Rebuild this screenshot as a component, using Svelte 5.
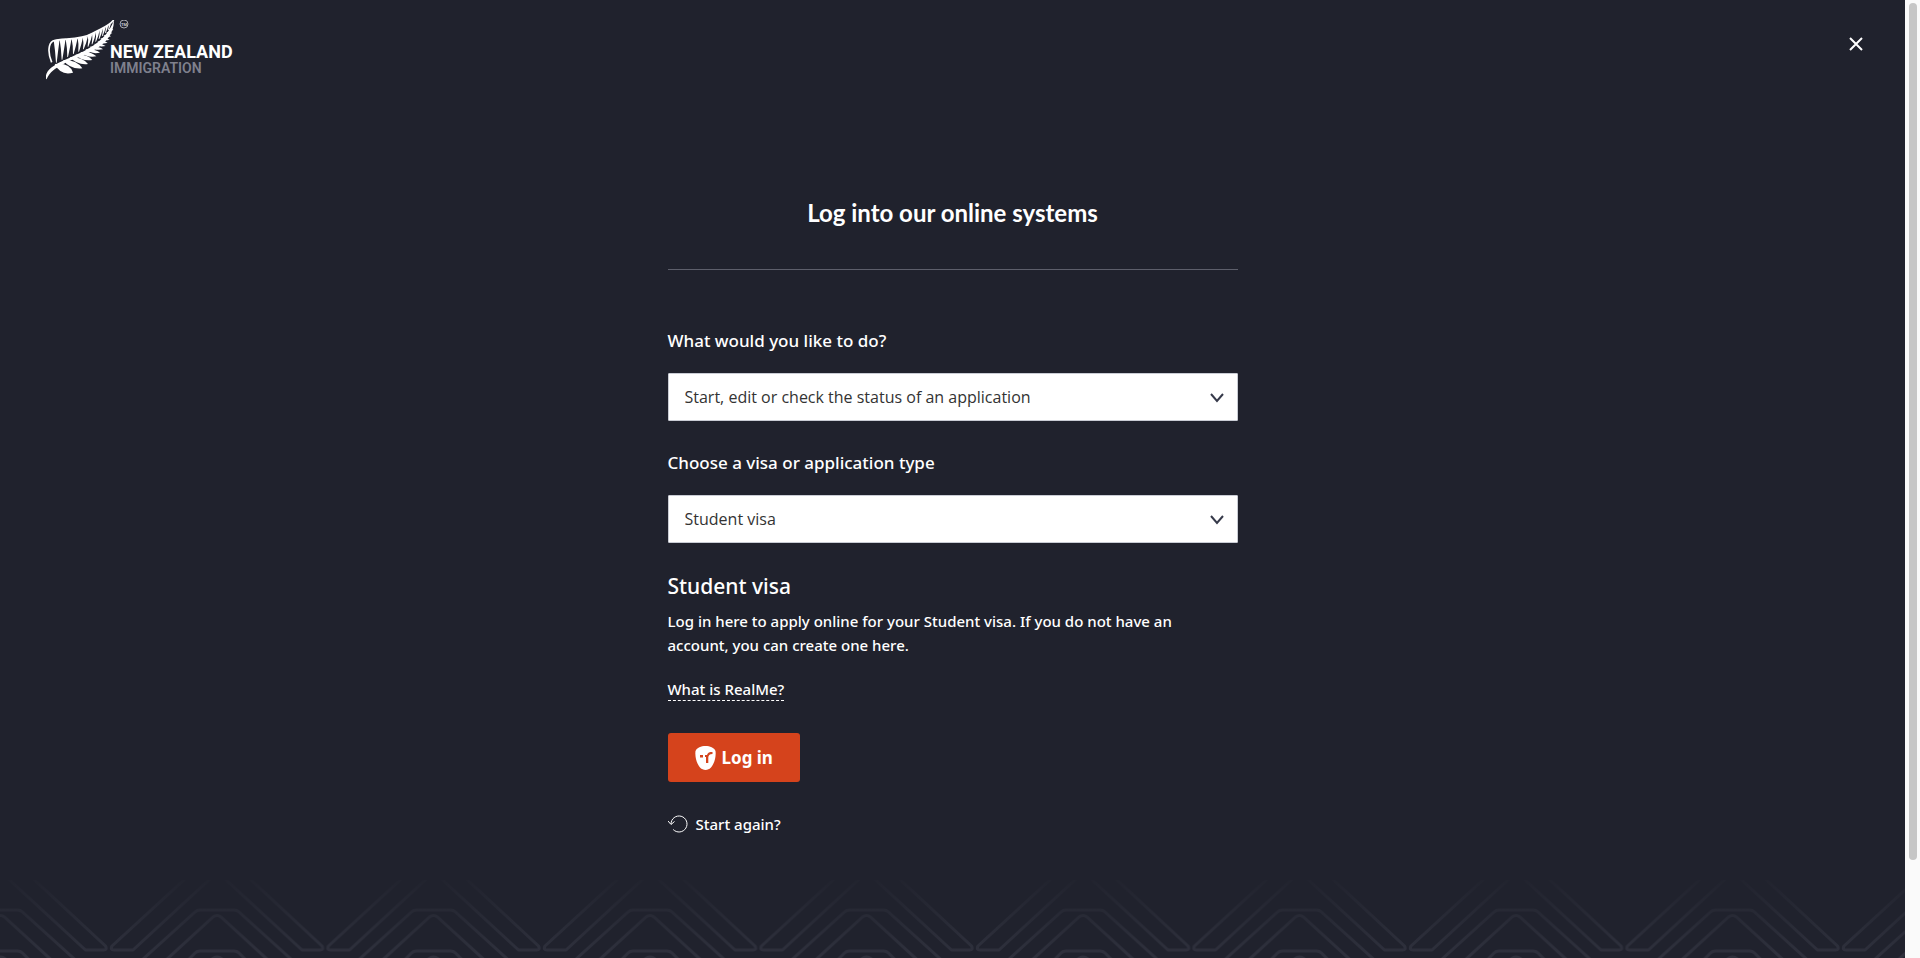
<script>
  const tasks = [
    'Start, edit or check the status of an application',
    'Respond to a request for information',
    'Check a visa',
  ];
  const visaTypes = ['Student visa', 'Visitor visa', 'Work visa', 'Resident visa'];

  let task = $state(tasks[0]);
  let visaType = $state(visaTypes[0]);
  let open = $state(true);

  const startAgain = () => {
    task = tasks[0];
    visaType = visaTypes[0];
  };

  // Upper fronds: x and y on the outer edge, x and y on the stem, width
  const upperFronds = [
    [44, 72, 43, 140, 9],
    [62, 70, 60, 131, 9],
    [80, 69, 77, 123, 9],
    [98, 68, 94, 114, 9],
    [115, 66, 110, 107, 8],
    [130, 62, 124, 100, 8],
    [144, 56, 138, 92, 7],
    [156, 51, 150, 85, 6],
    [167, 45, 161, 77, 6],
    [177, 40, 171, 69, 5],
    [186, 35, 181, 60, 5],
    [195, 30, 190, 51, 4],
    [203, 24, 199, 42, 4],
  ];

  // Lower fronds: base on the stem, tip, width
  const lowerFronds = [
    [38, 144, 93, 170, 18],
    [63, 132, 121, 157, 13],
    [83, 123, 138, 144, 11],
    [100, 116, 151, 132, 10],
    [115, 108, 163, 121, 9],
    [130, 100, 174, 110, 8],
    [143, 92, 183, 100, 7],
    [155, 84, 191, 90, 6],
    [166, 76, 197, 80, 6],
    [175, 67, 203, 71, 5],
    [184, 58, 207, 61, 5],
    [192, 49, 211, 52, 4],
    [199, 39, 214, 42, 4],
  ];

  const wedge = ([x1, y1, x2, y2, w]) => {
    const my = y1 + (y2 - y1) * 0.45;
    return `M${x1 - w} ${y1 + 1} Q${x1 - w / 2} ${my} ${x2 - 1} ${y2} L${x2 + 1} ${y2} Q${x1 + w / 2} ${my} ${x1 + w} ${y1 - 2}Z`;
  };

  const leaf = ([x1, y1, x2, y2, w]) => {
    const mx = (x1 + x2) / 2;
    const my = (y1 + y2) / 2;
    return `M${x1} ${y1} Q${mx + w} ${my - w} ${x2} ${y2} Q${mx - w / 2} ${my + w * 1.3} ${x1} ${y1}Z`;
  };
</script>

<div class="page">
  <div class="overlay">
    <header>
      <a class="logo" href="#home" aria-label="New Zealand Immigration">
        <svg width="190" height="60" viewBox="46 20 190 60">
          <g transform="translate(42 16) scale(0.3333)" fill="#fff">
            <path d="M11 190C9 168 26 152 60 136C112 111 192 86 216 11C216 100 112 118 66 143C38 158 24 166 14 189Z" />
            <path d="M29 139C16 108 20 82 33 75C62 65 112 76 152 52C180 36 202 30 215 12" fill="none" stroke="#fff" stroke-width="5" />
            {#each upperFronds as frond}
              <path d={wedge(frond)} />
            {/each}
            {#each lowerFronds as frond}
              <path d={leaf(frond)} />
            {/each}
          </g>
          <circle cx="124" cy="24" r="4" fill="none" stroke="#a9aab2" stroke-width="1" />
          <text class="mark" x="124" y="26" text-anchor="middle">TM</text>
          <text class="brand" x="110" y="58">NEW ZEALAND</text>
          <text class="sub" x="110" y="73">IMMIGRATION</text>
        </svg>
      </a>
      <button class="close" aria-label="Close" onclick={() => (open = !open)}>
        <svg width="14" height="14" viewBox="0 0 14 14">
          <path d="M1 1L13 13M13 1L1 13" stroke="#fff" stroke-width="2" />
        </svg>
      </button>
    </header>

    {#if open}
      <main>
        <h1>Log into our online systems</h1>

        <div class="field">
          <label for="task">What would you like to do?</label>
          <div class="select">
            <select id="task" bind:value={task}>
              {#each tasks as item}
                <option>{item}</option>
              {/each}
            </select>
            <svg width="14" height="10" viewBox="0 0 14 10"><path d="M1 1L7 8L13 1" /></svg>
          </div>
        </div>

        <div class="field">
          <label for="visa-type">Choose a visa or application type</label>
          <div class="select">
            <select id="visa-type" bind:value={visaType}>
              {#each visaTypes as item}
                <option>{item}</option>
              {/each}
            </select>
            <svg width="14" height="10" viewBox="0 0 14 10"><path d="M1 1L7 8L13 1" /></svg>
          </div>
        </div>

        <h2>{visaType}</h2>
        <p>Log in here to apply online for your {visaType}. If you do not have an account, you can create one here.</p>
        <a class="help" href="#realme">What is RealMe?</a>

        <button class="login">
          <!-- RealMe mask -->
          <svg width="21" height="24" viewBox="0 0 21 24">
            <path d="M10.500 0C15 0 19 1.500 20.500 5C21.500 12 18 24 10.500 24C3 24 -.5 12 .5 5C2 1.500 6 0 10.500 0Z" fill="#fff" />
            <rect x="5" y="9" width="3" height="2.500" fill="#d5431c" />
            <path d="M10 9H12C12.800 6.500 14.500 6 17.500 6V8C14.500 8.200 13.300 9.500 13.300 11.500V17H11V11H10Z" fill="#d5431c" />
          </svg>
          Log in
        </button>

        <button class="again" onclick={startAgain}>
          <svg width="20" height="18" viewBox="0 0 20 18">
            <path d="M3 9A8 8 0 1 1 5.200 14.500M0 6L3 9.500L6.500 6.500" fill="none" stroke="#fff" stroke-width="1" />
          </svg>
          Start again?
        </button>
      </main>
    {/if}

    <!-- Repeating line pattern, fading out towards the top -->
    <svg class="pattern" aria-hidden="true">
      <defs>
        <linearGradient id="fade" gradientUnits="userSpaceOnUse" x1="0" y1="0" x2="0" y2="78">
          <stop offset="0" stop-color="#2f313d" stop-opacity="0.1" />
          <stop offset="1" stop-color="#2f313d" />
        </linearGradient>
        <pattern id="lines" patternUnits="userSpaceOnUse" x="109" y="0" width="216.500" height="78">
          <g fill="none" stroke="url(#fade)" stroke-width="3" stroke-linejoin="round">
            <path d="M76 -1L3 66Q1 70 5 70H24L101 -1" />
            <path d="M141 -1L213 66Q215 70 211 70H193L116 -1" />
            <path d="M34 79L86 32Q88 30 91 30H125Q128 30 130 32L182 79" />
            <path d="M57 80L104 37Q108 34 112 37L159 80" />
            <path d="M80 79L86 73Q88 71 91 71H125Q128 71 130 73L136 79" />
            <path d="M103 79Q108 75 113 79" />
          </g>
        </pattern>
      </defs>
      <rect width="100%" height="100%" fill="url(#lines)" />
    </svg>
  </div>

  <div class="scrollbar"><div class="thumb"></div></div>
</div>

<style>
  :global(body) {
    margin: 0;
    background: #20222d;
  }

  .page {
    display: grid;
    grid-template-columns: 1fr 15px;
    min-height: 100vh;
    color: #fff;
    font-family: 'Noto Sans', 'Open Sans', sans-serif;
    font-size: 15px;
    line-height: 24px;
  }

  .overlay {
    display: flex;
    flex-direction: column;
    background: #20222d;
  }

  header {
    display: flex;
    justify-content: space-between;
    align-items: flex-start;
    padding: 20px 25px 0 46px;
  }

  .logo,
  .logo svg {
    display: block;
  }

  .logo text {
    font-family: Roboto, sans-serif;
    fill: #fff;
  }

  .logo .brand {
    font-size: 18px;
    font-weight: 700;
  }

  .logo .sub {
    font-size: 14px;
    font-weight: 600;
    fill: #7f808d;
  }

  .logo .mark {
    font-size: 4px;
    font-weight: 700;
    fill: #c9cad0;
  }

  button {
    display: flex;
    align-items: center;
    padding: 0;
    border: none;
    background: none;
    color: inherit;
    font-family: inherit;
    cursor: pointer;
  }

  .close {
    justify-content: center;
    width: 48px;
    height: 48px;
  }

  main {
    display: flex;
    flex-direction: column;
    align-items: flex-start;
    box-sizing: border-box;
    width: 100%;
    max-width: 570px;
    margin: 0 auto;
    padding-top: 117px;
  }

  h1 {
    width: 100%;
    margin: 0 0 59px;
    padding-bottom: 40px;
    border-bottom: 1px solid #5d5f6b;
    font-family: Lato, sans-serif;
    font-size: 24px;
    font-weight: 700;
    line-height: 32px;
    text-align: center;
  }

  .field {
    width: 100%;
    margin-bottom: 30px;
  }

  label {
    display: block;
    margin-bottom: 20px;
    font-size: 17px;
    font-weight: 500;
  }

  .select {
    position: relative;
  }

  select {
    display: block;
    width: 100%;
    height: 48px;
    padding: 0 40px 0 16px;
    border: 1px solid #c9ccd4;
    border-radius: 1px;
    background: #fff;
    color: #333;
    font-family: 'Open Sans', sans-serif;
    font-size: 16px;
    appearance: none;
  }

  .select svg {
    position: absolute;
    right: 14px;
    top: 20px;
    fill: none;
    stroke: #363a4a;
    stroke-width: 2;
    pointer-events: none;
  }

  h2 {
    margin: 0 0 10px;
    font-size: 21px;
    font-weight: 500;
    line-height: 26px;
  }

  p {
    max-width: 540px;
    margin: 0 0 22px;
    font-weight: 500;
  }

  .help {
    border-bottom: 1px dashed #fff;
    color: inherit;
    font-weight: 500;
    line-height: 21px;
    text-decoration: none;
  }

  .login {
    gap: 6px;
    height: 49px;
    margin: 32px 0 30px;
    padding: 0 27px;
    border-radius: 3px;
    background: #d5431c;
    font-size: 17px;
    font-weight: 700;
  }

  .again {
    gap: 8px;
    font-size: 15px;
    font-weight: 500;
    line-height: 24px;
  }

  .pattern {
    display: block;
    width: 100%;
    height: 78px;
    margin-top: auto;
  }

  .scrollbar {
    display: flex;
    justify-content: center;
    padding: 3px 0;
    background: #fafafa;
  }

  .thumb {
    width: 8px;
    height: 90%;
    border-radius: 4px;
    background: #c6c6c6;
  }
</style>
